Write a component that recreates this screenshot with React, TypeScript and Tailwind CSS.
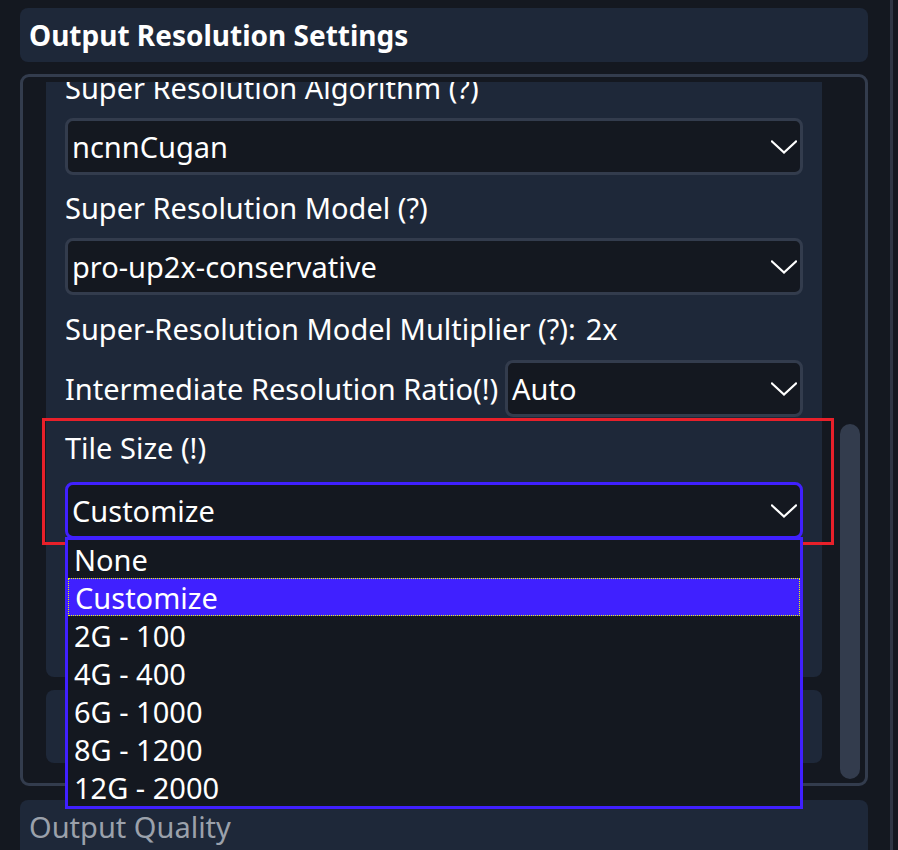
import React from "react";

const font = { fontFamily: '"Noto Sans", "Open Sans", sans-serif' };

function Chevron() {
  return (
    <svg width="26" height="14" viewBox="0 0 26 14" fill="none" className="shrink-0">
      <path d="M1 1.5 L13 12.5 L25 1.5" stroke="#ffffff" strokeWidth="2.2" strokeLinecap="square" />
    </svg>
  );
}

function Select({ value, active }: { value: string; active?: boolean }) {
  return (
    <div
      className={`h-[57px] flex items-center justify-between rounded-[8px] border-[3px] bg-[#141820] pl-[4px] pr-[3px] ${
        active ? "border-[#4020ff]" : "border-[#333c4d]"
      }`}
    >
      <span className="text-[29px] text-white leading-none">{value}</span>
      <Chevron />
    </div>
  );
}

function Label({ text }: { text: string }) {
  return (
    <div className="h-[63px] flex items-center pt-[1px] text-[29px] text-white leading-none">
      {text}
    </div>
  );
}

const tileOptions = ["None", "Customize", "2G - 100", "4G - 400", "6G - 1000", "8G - 1200", "12G - 2000"];

export default function App() {
  return (
    <div className="w-[898px] h-[850px] bg-[#141820] flex overflow-hidden relative" style={font}>
      <div className="w-[890px] pl-[20px] pr-[22px] pt-[8px]">
        {/* header */}
        <div className="h-[54px] rounded-[8px] bg-[#1e2839] flex items-center px-[9px]">
          <span className="text-[28px] font-bold text-white leading-none">Output Resolution Settings</span>
        </div>

        {/* scroll box */}
        <div className="mt-[12px] h-[712px] rounded-[9px] border-[3px] border-[#333c4d] flex pl-[23px] pr-[5px] pt-[5px] pb-[3px]">
          <div className="w-[776px] overflow-hidden">
            <div className="mt-[-37px] rounded-[8px] bg-[#1e2839] pt-[10px] pb-[138px] px-[19px]">
              <Label text="Super Resolution Algorithm (?)" />
              <Select value="ncnnCugan" />
              <Label text="Super Resolution Model (?)" />
              <Select value="pro-up2x-conservative" />
              <div className="h-[65px] flex items-center pt-[1px] text-[29px] text-white leading-none gap-[10px]">
                <span>Super-Resolution Model Multiplier (?):</span>
                <span>2x</span>
              </div>
              <div className="flex items-center justify-between">
                <span className="text-[29px] text-white leading-none">Intermediate Resolution Ratio(!)</span>
                <div className="w-[298px]">
                  <Select value="Auto" />
                </div>
              </div>
              <div className="h-[65px] flex items-center pb-[4px] text-[29px] text-white leading-none">Tile Size (!)</div>
              <Select value="Customize" active />
            </div>
            <div className="mt-[13px] h-[73px] rounded-[8px] bg-[#1e2839]" />
          </div>
          <div className="ml-[18px] w-[20px] pt-[342px] pb-[4px]">
            <div className="h-[355px] w-[20px] rounded-full bg-[#333c4d]" />
          </div>
        </div>

        {/* next section */}
        <div className="mt-[14px] h-[60px] rounded-[8px] bg-[#1e2839] flex items-start pt-[10px] px-[9px]">
          <span className="text-[29px] text-[#9ba1ab] leading-[34px]">Output Quality</span>
        </div>
      </div>
      <div className="flex-1 border-l-[3px] border-[#2f3644]" />

      {/* annotation box */}
      <div className="absolute left-[42px] top-[418px] w-[792px] h-[127px] border-[3px] border-[#e8202a]" />

      {/* open dropdown list */}
      <div className="absolute left-[65px] top-[537px] w-[738px] border-[3px] border-[#4020ff] bg-[#141820]">
        {tileOptions.map((o) => (
          <div
            key={o}
            className={`h-[38px] flex items-center pl-[6px] text-[29px] text-white leading-none ${
              o === "Customize" ? "bg-[#4020ff] border border-dotted border-[#e6ff00] pl-[5px]" : ""
            }`}
          >
            {o}
          </div>
        ))}
      </div>
    </div>
  );
}
